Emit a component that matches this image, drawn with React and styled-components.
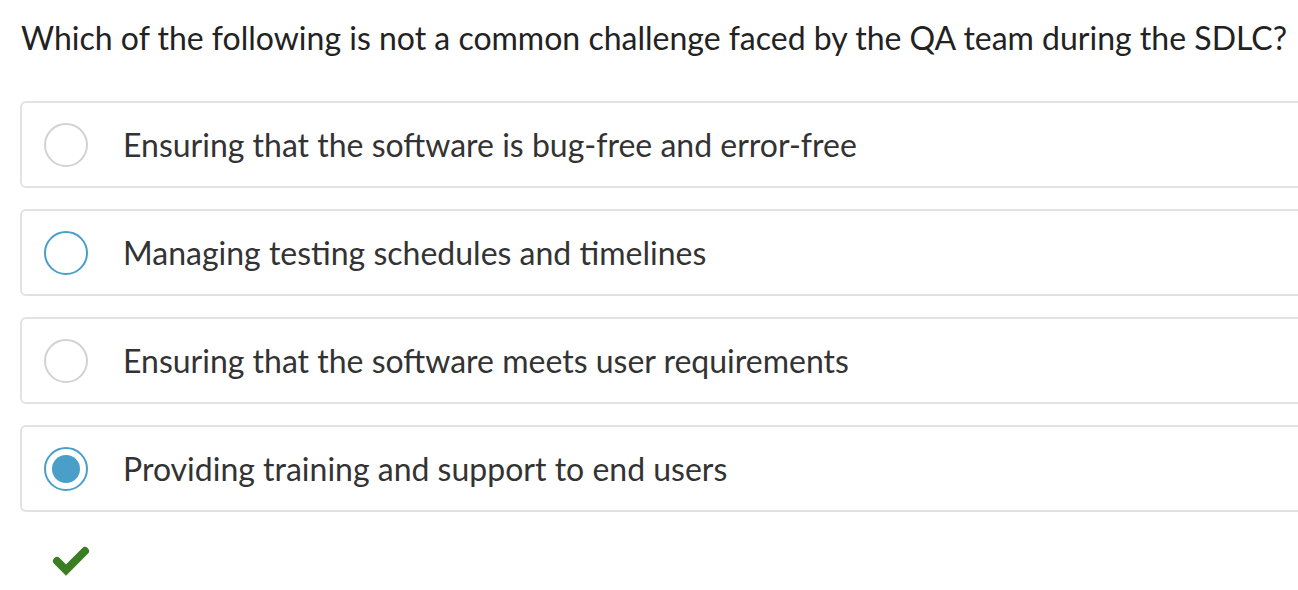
import styled, { createGlobalStyle } from 'styled-components';

const GlobalStyle = createGlobalStyle`
  html, body {
    margin: 0;
    padding: 0;
    background: #ffffff;
    overflow: hidden;
  }
  body {
    font-family: Lato, "Noto Sans", sans-serif;
  }
`;

const Page = styled.div`
  width: 1298px;
  height: 590px;
  overflow: hidden;
  padding-left: 20px;
  box-sizing: border-box;
`;

const Question = styled.h1`
  margin: 0;
  padding: 17px 0 0 1px;
  font-size: 32px;
  font-weight: 400;
  line-height: 42px;
  color: #222222;
  white-space: nowrap;
`;

const Options = styled.div`
  display: flex;
  flex-direction: column;
  gap: 21px;
  margin-top: 42px;
`;

const Option = styled.label`
  display: flex;
  align-items: center;
  gap: 35px;
  width: 1320px;
  height: 87px;
  box-sizing: border-box;
  padding-left: 22px;
  border: 2px solid #e2e2e2;
  border-radius: 6px;
  background: #ffffff;
`;

const Radio = styled.span`
  flex: none;
  display: flex;
  align-items: center;
  justify-content: center;
  width: 44px;
  height: 44px;
  box-sizing: border-box;
  border-radius: 50%;
  border: 2px solid ${(p) => (p.$active ? '#4a9fc9' : '#d2d2d2')};
  background: #ffffff;
`;

const Dot = styled.span`
  width: 28px;
  height: 28px;
  border-radius: 50%;
  background: #4a9fc9;
`;

const OptionText = styled.span`
  font-size: 32px;
  color: #333333;
  white-space: nowrap;
`;

const Result = styled.div`
  margin-top: 34px;
  padding-left: 32px;
`;

const options = [
  { text: 'Ensuring that the software is bug-free and error-free' },
  { text: 'Managing testing schedules and timelines', focused: true },
  { text: 'Ensuring that the software meets user requirements' },
  { text: 'Providing training and support to end users', checked: true },
];

function App() {
  return (
    <Page>
      <GlobalStyle />
      <Question>
        Which of the following is not a common challenge faced by the QA team during the SDLC?
      </Question>
      <Options>
        {options.map((o) => (
          <Option key={o.text}>
            <Radio $active={o.focused || o.checked}>{o.checked && <Dot />}</Radio>
            <OptionText>{o.text}</OptionText>
          </Option>
        ))}
      </Options>
      <Result>
        <svg width="38" height="30" viewBox="0 0 38 30">
          <path
            d="M5 15 L14 24 L33 5"
            fill="none"
            stroke="#3a7d23"
            strokeWidth="8"
            strokeLinecap="round"
            strokeLinejoin="miter"
          />
        </svg>
      </Result>
    </Page>
  );
}

export default App;
